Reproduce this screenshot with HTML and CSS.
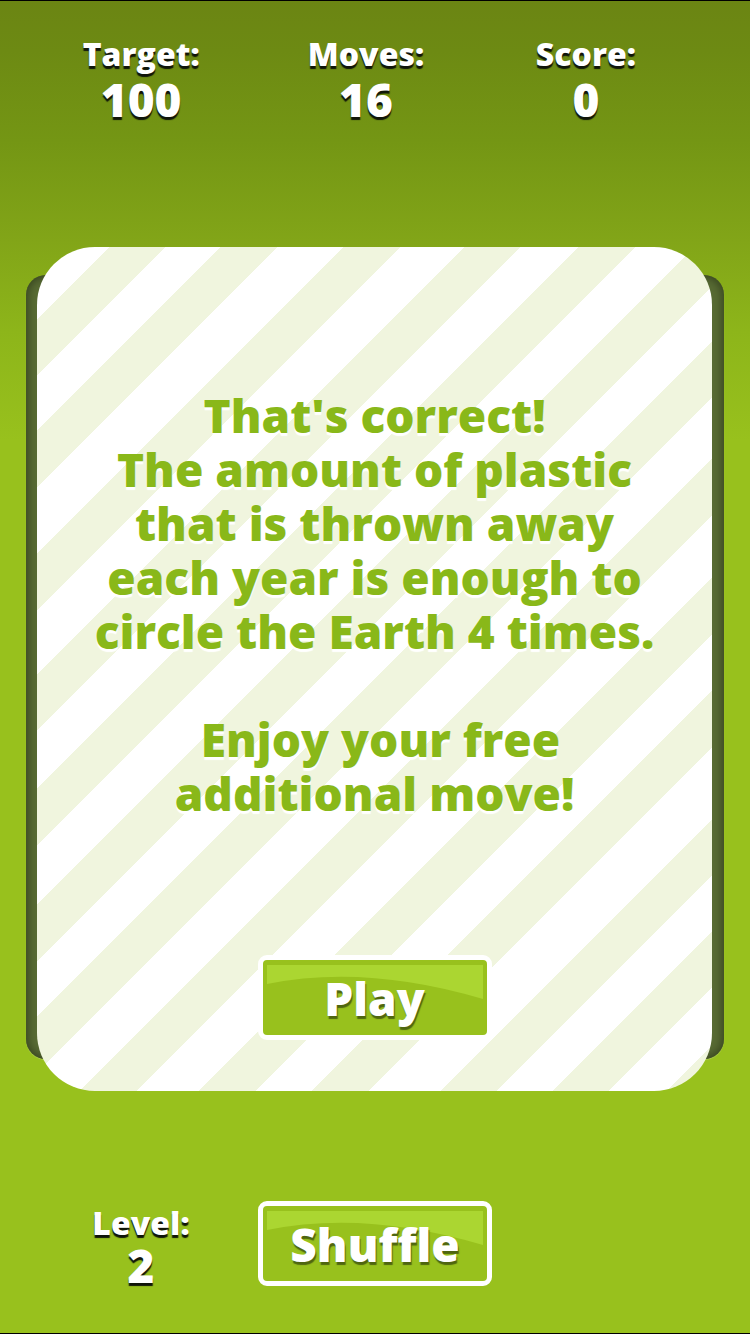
FILE: index.html
```html
<!DOCTYPE html>
<html lang="en">
<head>
<meta charset="utf-8">
<meta name="viewport" content="width=device-width, initial-scale=1">
<title>Recycling game</title>
<link rel="stylesheet" href="styles.css">
</head>
<body>
<main class="game">
  <header class="stats">
    <div class="stat stat-target"><span class="label">Target:</span><span class="value">100</span></div>
    <div class="stat stat-moves"><span class="label">Moves:</span><span class="value">16</span></div>
    <div class="stat stat-score"><span class="label">Score:</span><span class="value">0</span></div>
  </header>
  <section class="board">
    <div class="card">
      <div class="message">
        <p>That's correct!<br>The amount of plastic<br>that is thrown away<br>each year is enough to<br>circle the Earth 4 times.</p>
        <p class="bonus">&nbsp;Enjoy your free<br>additional move!</p>
      </div>
      <button class="button" type="button">
        <svg class="gloss" viewBox="0 0 216 34" preserveAspectRatio="none" aria-hidden="true"><path d="M0 0H216V34Q98 -1 0 19Z"/></svg>
        <span class="caption">Play</span>
      </button>
    </div>
  </section>
  <footer class="controls">
    <div class="stat"><span class="label">Level:</span><span class="value">2</span></div>
    <button class="button" type="button">
      <svg class="gloss" viewBox="0 0 216 34" preserveAspectRatio="none" aria-hidden="true"><path d="M0 0H216V34Q98 -1 0 19Z"/></svg>
      <span class="caption">Shuffle</span>
    </button>
  </footer>
</main>
</body>
</html>
```
FILE: styles.css
```css
* { box-sizing: border-box; }

body {
  margin: 0;
  background: #98c11d;
  font-family: "Gill Sans", "Open Sans", Lato, sans-serif;
  font-weight: 800;
  color: #fff;
}

.game {
  min-height: 100vh;
  display: flex;
  flex-direction: column;
  border-top: 1px solid #000;
  border-bottom: 1px solid #000;
  background: linear-gradient(#6b8513 0, #6d8a13 50px, #749614 140px, #82a518 240px, #8db51a 330px, #98c11d 440px);
}

.stats {
  display: grid;
  grid-template-columns: 36fr 24fr 36fr;
  padding: 33px 24px 0 0;
  height: 246px;
}

.stat {
  display: flex;
  flex-direction: column;
  align-items: center;
  text-shadow: 0 3px 1px #10150a;
}

.stat-target { padding-left: 10px; }

.stat-moves { padding-left: 6px; }

.stat-score { padding-right: 8px; }

.label { font-size: 32px; line-height: 40px; }

.value { font-size: 46px; line-height: 50px; }

.board {
  flex: 1;
  display: flex;
  padding: 0 26px;
  position: relative;
}

.board::before {
  content: "";
  position: absolute;
  inset: 28px 26px 32px;
  border-radius: 20px;
  background: #586b34;
  box-shadow: inset 0 0 8px 2px #38451f, 0 1px 1px #a9c84b;
}

.card {
  --stripe: #f0f5de;
  position: relative;
  flex: 1;
  margin: 0 12px 0 11px;
  padding: 141px 24px 51px;
  display: flex;
  flex-direction: column;
  align-items: center;
  justify-content: space-between;
  border-radius: 58px;
  background: linear-gradient(135deg,
    #fff 51px, var(--stripe) 51px 91px,
    #fff 91px 130px, var(--stripe) 130px 170px,
    #fff 170px 217px, var(--stripe) 217px 257px,
    #fff 257px 302px, var(--stripe) 302px 342px,
    #fff 342px 383px, var(--stripe) 383px 423px,
    #fff 423px 465px, var(--stripe) 465px 505px,
    #fff 505px 544px, var(--stripe) 544px 584px,
    #fff 584px 627px, var(--stripe) 627px 667px,
    #fff 667px 711px, var(--stripe) 711px 751px,
    #fff 751px 791px, var(--stripe) 791px 831px,
    #fff 831px 882px, var(--stripe) 882px 922px,
    #fff 922px 961px, var(--stripe) 961px 1001px,
    #fff 1001px 1042px, var(--stripe) 1042px);
}

.message {
  color: #89b819;
  font-size: 46px;
  line-height: 54px;
  text-align: center;
  text-shadow: 0 3px 1px #fff;
}

.message p { margin: 0; white-space: nowrap; }

.message .bonus { margin-top: 54px; }

.button {
  position: relative;
  width: 234px;
  height: 85px;
  padding: 0;
  border: 5px solid #fff;
  border-radius: 9px;
  background: #98c11d;
  color: #fff;
  font: inherit;
  font-size: 46px;
  line-height: 72px;
  text-shadow: 1px 3px 1px #4f6610;
  cursor: pointer;
}

.gloss {
  position: absolute;
  top: 5px;
  left: 4px;
  width: calc(100% - 8px);
  height: 34px;
  fill: #abd631;
}

.caption { position: relative; }

.controls {
  display: grid;
  grid-template-columns: 1fr 234px 1fr;
  align-items: start;
  height: 242px;
  padding-top: 110px;
}

.controls .stat { padding: 2px 0 0 24px; }

.controls .value { line-height: 44px; }
```
